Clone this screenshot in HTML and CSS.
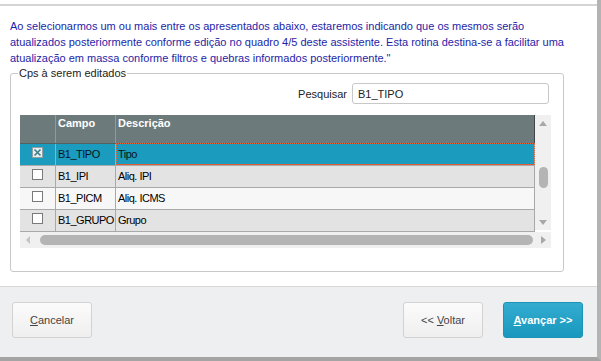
FILE: index.html
```html
<!DOCTYPE html>
<html>
<head>
    <title>Assistente - Campos a serem editados</title>
    <meta charset="utf-8">
    <link rel="stylesheet" href="styles.css">
</head>
<body>
    <div class="page">
        <div class="top-line"></div>
        <div class="content">
            <p class="intro">Ao selecionarmos um ou mais entre os apresentados abaixo, estaremos indicando que os mesmos serão atualizados posteriormente conforme edição no quadro 4/5 deste assistente. Esta rotina destina-se a facilitar uma atualização em massa conforme filtros e quebras informados posteriormente."</p>
            <fieldset class="group">
                <legend>Cps à serem editados</legend>
                <div class="search">
                    <label for="busca">Pesquisar</label>
                    <input type="text" id="busca" value="B1_TIPO">
                </div>
                <div class="grid">
                    <div class="grid-body">
                        <table class="fields">
                            <thead>
                                <tr>
                                    <th class="col-check"></th>
                                    <th class="col-campo">Campo</th>
                                    <th>Descrição</th>
                                </tr>
                            </thead>
                            <tbody>
                                <tr class="selected">
                                    <td class="col-check"><span class="check checked"><svg width="9" height="9" viewBox="0 0 9 9"><path d="M1.5 1.5L7.5 7.5M7.5 1.5L1.5 7.5" stroke="#3f7d86" stroke-width="1.6"/></svg></span></td>
                                    <td>B1_TIPO</td>
                                    <td class="focus">Tipo</td>
                                </tr>
                                <tr>
                                    <td class="col-check"><span class="check"></span></td>
                                    <td>B1_IPI</td>
                                    <td>Aliq. IPI</td>
                                </tr>
                                <tr class="light">
                                    <td class="col-check"><span class="check"></span></td>
                                    <td>B1_PICM</td>
                                    <td>Aliq. ICMS</td>
                                </tr>
                                <tr>
                                    <td class="col-check"><span class="check"></span></td>
                                    <td>B1_GRUPO</td>
                                    <td>Grupo</td>
                                </tr>
                            </tbody>
                        </table>
                        <div class="vscroll">
                            <div class="arrow-box"><span class="arrow up"></span></div>
                            <div class="vtrack"><div class="vthumb"></div></div>
                            <div class="arrow-box"><span class="arrow down"></span></div>
                        </div>
                    </div>
                    <div class="hscroll">
                        <div class="arrow-box"><span class="arrow left"></span></div>
                        <div class="hthumb"></div>
                        <div class="arrow-box"><span class="arrow right"></span></div>
                    </div>
                </div>
            </fieldset>
        </div>
        <div class="footer">
            <button class="btn"><u>C</u>ancelar</button>
            <div class="spacer"></div>
            <button class="btn">&lt;&lt; <u>V</u>oltar</button>
            <button class="btn primary"><u>A</u>vançar &gt;&gt;</button>
        </div>
    </div>
</body>
</html>
```

FILE: styles.css
```css
body { margin: 0; background: #fff; font-family: "Liberation Sans", Arial, sans-serif; font-size: 11px; color: #222; }
.page {
    box-sizing: border-box;
    width: 601px;
    height: 361px;
    display: flex;
    flex-direction: column;
    border-right: 4px solid #b3b3b3;
    border-bottom: 4px solid #a4a4a4;
}
.top-line { margin-top: 4px; height: 2px; background: #d4d4d4; }
.content { flex: 1; padding: 12px 0 0 10px; }
.intro {
    margin: 0;
    width: 565px;
    line-height: 16px;
    color: #1e1ea8;
}
.group {
    box-sizing: border-box;
    width: 554px;
    margin: 0;
    padding: 3px 12px 23px 9px;
    border: 1px solid #c9c9c9;
    border-radius: 3px;
}
.group legend { padding: 0 1px; margin-left: -2px; line-height: 14px; color: #222; }
.search { display: flex; justify-content: flex-end; align-items: center; gap: 5px; padding-right: 2px; }
.search input {
    box-sizing: border-box;
    width: 197px;
    height: 21px;
    padding: 0 5px;
    border: 1px solid #c8c8c8;
    border-radius: 3px;
    font: 11px "Liberation Sans", Arial, sans-serif;
    color: #222;
}
.grid { margin-top: 11px; width: 531px; }
.grid-body { display: flex; align-items: flex-start; }
.fields { width: 515px; border-collapse: collapse; table-layout: fixed; }
.fields thead tr { height: 28px; }
.fields tbody tr { height: 22px; }
.fields th {
    padding: 2px 2px 0;
    background: #6c7a7c;
    color: #fff;
    font-weight: bold;
    text-align: left;
    vertical-align: top;
    border-right: 1px solid #8e9b9d;
    border-bottom: 1px solid #55615f;
}
.fields th:last-child { border-right: 1px solid #3f4749; }
.fields td {
    padding: 0 2px;
    background: #e3e3e3;
    color: #000;
    letter-spacing: -0.5px;
    border-right: 1px solid #a9a9a9;
    border-bottom: 1px solid #a9a9a9;
    white-space: nowrap;
    overflow: hidden;
}
.fields tr.light td { background: #f7f7f7; }
.fields tr.selected td { background: #1b9bbd; color: #06161c; }
.fields td.focus { outline: 1px dotted #e8643a; outline-offset: -1px; }
.col-check { width: 31px; }
.col-campo { width: 55px; }
.fields td.col-check { vertical-align: top; padding: 3px 0 0 12px; }
.check {
    box-sizing: border-box;
    display: block;
    width: 11px;
    height: 11px;
    border: 1px solid #7a7a7a;
    background: #fff;
}
.check.checked { border-color: #90a0a2; background: #e9efef; }
.check svg { display: block; margin: 0; }
.vscroll { width: 16px; height: 115px; background: #f0f0f0; display: flex; flex-direction: column; }
.arrow-box { width: 16px; height: 16px; display: flex; align-items: center; justify-content: center; }
.vtrack { flex: 1; }
.vthumb { width: 9px; height: 21px; margin: 36px auto 0; border-radius: 5px; background: #b4b4b4; }
.hscroll { height: 16px; background: #f0f0f0; display: flex; align-items: center; }
.hthumb { flex: 1; height: 10px; margin: 0 2px 0 4px; border-radius: 5px; background: #b4b4b4; }
.arrow { width: 0; height: 0; border: 4px solid transparent; }
.arrow.up { border-bottom: 5px solid #a8a8a8; border-top: 0; }
.arrow.down { border-top: 5px solid #a8a8a8; border-bottom: 0; }
.arrow.left { border-right: 4px solid #c4c4c4; border-left: 0; }
.arrow.right { border-left: 5px solid #a8a8a8; border-right: 0; }
.footer {
    box-sizing: border-box;
    height: 71px;
    display: flex;
    align-items: flex-start;
    gap: 20px;
    padding: 15px 14px 0 12px;
    border-top: 1px solid #d8d8d8;
    background: #eeeff0;
}
.spacer { flex: 1; }
.btn {
    width: 80px;
    height: 36px;
    border: 1px solid #d2d2d2;
    border-radius: 3px;
    background: linear-gradient(#fbfbfb, #efefef);
    color: #444;
    font: 11px "Liberation Sans", Arial, sans-serif;
    cursor: pointer;
}
.btn.primary {
    border-color: #1a93b5;
    background: linear-gradient(#34acd0, #1898bd);
    color: #fff;
    font-weight: bold;
}
```
